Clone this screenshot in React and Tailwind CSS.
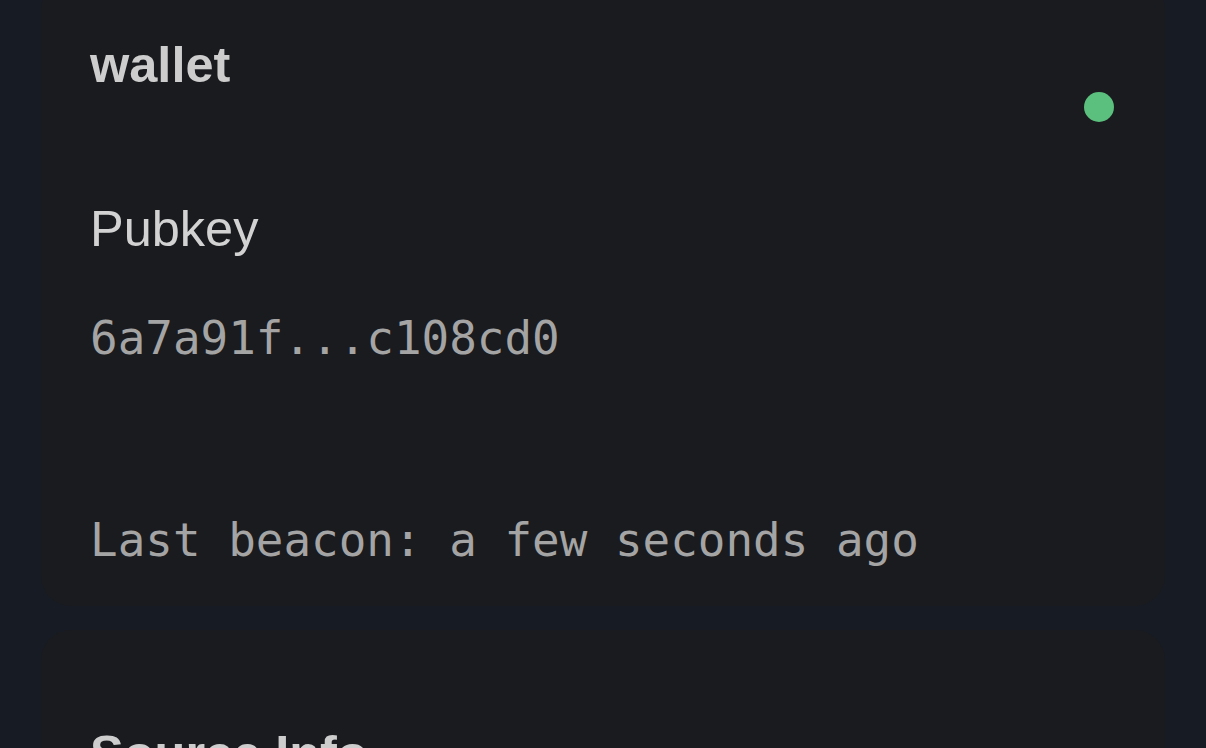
export default function App() {
  return (
    <div className="min-h-screen bg-[#171c24] px-[41px] overflow-hidden">
      <div className="-mt-[20px] flex flex-col gap-[24px]">
        {/* Wallet card */}
        <div className="bg-[#1a1b1f] rounded-[30px] pl-[49px] pr-[51px] pt-[55px] pb-[38px]">
          <div className="flex items-start justify-between h-[60px]">
            <h2 className="font-['Liberation_Sans',Arial,sans-serif] font-bold text-[50.5px] leading-[60px] text-[#cdcdcd]">
              wallet
            </h2>
            <span className="mt-[57px] w-[30px] h-[30px] rounded-full bg-[#5bbf7d]" />
          </div>
          <p className="mt-[104px] font-['Liberation_Sans',Arial,sans-serif] text-[50.5px] leading-[60px] text-[#d2d2d2]">
            Pubkey
          </p>
          <p className="mt-[51px] font-['DejaVu_Sans_Mono',monospace] text-[45.9px] leading-[56px] text-[#a4a4a4]">
            6a7a91f...c108cd0
          </p>
          <p className="mt-[146px] font-['DejaVu_Sans_Mono',monospace] text-[45.9px] leading-[56px] text-[#a4a4a4]">
            Last beacon: a few seconds ago
          </p>
        </div>

        {/* Source info card */}
        <div className="bg-[#1a1b1f] rounded-[30px] pl-[49px] pt-[94px] pb-[60px]">
          <h2 className="font-['Liberation_Sans',Arial,sans-serif] font-bold text-[50.5px] leading-[60px] text-[#cdcdcd]">
            Source Info
          </h2>
        </div>
      </div>
    </div>
  );
}
